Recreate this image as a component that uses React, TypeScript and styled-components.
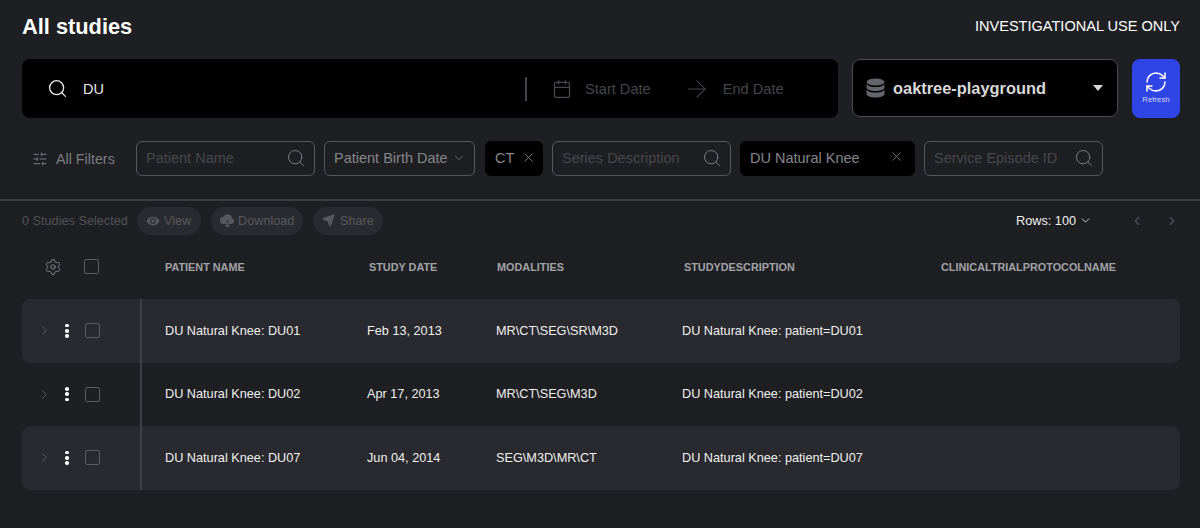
import React from "react";
import styled, { createGlobalStyle } from "styled-components";
import {
  Search, Calendar, ArrowRight, RefreshCw, SlidersHorizontal, ChevronDown, ChevronLeft, ChevronRight,
  X, Send, Settings,
} from "lucide-react";

const Global = createGlobalStyle`
  html, body { margin: 0; padding: 0; background: #1e1f23; }
  body { font-family: "Liberation Sans", Arial, sans-serif; width: 1200px; height: 528px; overflow: hidden; }
  * { box-sizing: border-box; }
`;

const Page = styled.div`
  width: 1200px;
  height: 528px;
  background: #1e1f23;
  color: #fff;
  display: flex;
  flex-direction: column;
`;
const Header = styled.header`
  height: 59px;
  padding: 14px 20px 0 22px;
  display: flex;
  justify-content: space-between;
  align-items: flex-start;
`;
const Title = styled.h1`
  margin: 0;
  font-size: 21.8px;
  line-height: 25px;
  font-weight: 700;
`;
const Notice = styled.div`
  font-size: 14.55px;
  line-height: 24px;
`;
const SearchRow = styled.div`
  display: flex;
  padding: 0 20px 0 22px;
  gap: 14px;
  height: 59px;
`;
const SearchBar = styled.div`
  flex: 0 0 816px;
  background: #000;
  border-radius: 8px;
  display: flex;
  align-items: center;
  padding-left: 25px;
  font-size: 14.5px;
`;
const SearchText = styled.span`
  flex: 0 0 441px;
  margin-left: 15px;
  color: #e8e8e8;
`;
const Separator = styled.span`
  width: 2px;
  height: 24px;
  background: #44464c;
  margin-right: 25px;
  margin-left: 1px;
`;
const DatePlaceholder = styled.span<{ $ml: number }>`
  color: #44464b;
  font-size: 14.6px;
  margin-left: ${(p) => p.$ml}px;
`;
const DatasetSelect = styled.div`
  flex: 0 0 266px;
  height: 58px;
  background: #000;
  border: 1px solid #4a4c52;
  border-radius: 8px;
  display: flex;
  align-items: center;
  padding: 0 14px 0 13px;
`;
const DatasetName = styled.span`
  flex: 1;
  margin-left: 8px;
  font-size: 16.4px;
  font-weight: 700;
  color: #d8d8d8;
`;
const Caret = styled.span`
  width: 0;
  height: 0;
  border-left: 5px solid transparent;
  border-right: 5px solid transparent;
  border-top: 6px solid #d8d8d8;
`;
const RefreshButton = styled.button`
  flex: 0 0 48px;
  border: 0;
  border-radius: 8px;
  background: #3045e6;
  display: flex;
  flex-direction: column;
  align-items: center;
  justify-content: center;
  gap: 1px;
  padding: 0 0 3px;
  font-family: inherit;
  font-size: 7.8px;
  color: #d0d6ff;
`;
const FilterRow = styled.div`
  display: flex;
  align-items: center;
  margin-top: 23px;
  height: 35px;
  padding-left: 32px;
`;
const AllFilters = styled.div`
  flex: 0 0 104px;
  display: flex;
  align-items: center;
  gap: 8px;
  color: #7a7c82;
  font-size: 14.3px;
`;
const Field = styled.div<{ $w: number; $mr: number; $filled?: boolean }>`
  flex: 0 0 ${(p) => p.$w}px;
  margin-right: ${(p) => p.$mr}px;
  height: 35px;
  border-radius: 6px;
  border: ${(p) => (p.$filled ? "0" : "1px solid #56585e")};
  background: ${(p) => (p.$filled ? "#000" : "transparent")};
  display: flex;
  align-items: center;
  justify-content: space-between;
  padding: 0 ${(p) => (p.$filled ? 7 : 8)}px 2px ${(p) => (p.$filled ? 10 : 9)}px;
  font-size: 14.5px;
  color: #46484d;
`;
const FieldValue = styled.span`
  color: #84868c;
`;
const Divider = styled.div`
  height: 2px;
  background: #3a3c41;
  margin-top: 23px;
`;
const ActionRow = styled.div`
  height: 33px;
  padding: 6px 0 0 22px;
  display: flex;
  align-items: center;
  font-size: 12.7px;
  color: #505257;
`;
const Selected = styled.span`
  flex: 0 0 115px;
`;
const Pill = styled.span<{ $w: number; $gap: number }>`
  flex: 0 0 ${(p) => p.$w}px;
  height: 28px;
  border-radius: 14px;
  background: #2a2b30;
  padding: 0 0 0 9px;
  display: flex;
  align-items: center;
  gap: ${(p) => p.$gap}px;
  margin-right: 10px;
  color: #57595e;
`;
const Rows = styled.div`
  margin-left: auto;
  margin-right: 38px;
  display: flex;
  align-items: center;
  gap: 3px;
  color: #f0f0f0;
  font-size: 12.7px;
`;
const Pager = styled.div`
  display: flex;
  gap: 21px;
  margin-right: 21px;
  color: #50525a;
`;
const TableHead = styled.div`
  margin: 0 20px 0 22px;
  height: 65px;
  display: grid;
  grid-template-columns: 120px 23px 204px 128px 187px 257px 1fr;
  align-items: center;
  font-size: 10.85px;
  font-weight: 700;
  color: #a2a3a8;
  padding-top: 1px;
`;
const HeadControls = styled.div`
  grid-column: 1 / 3;
  display: flex;
  align-items: center;
  padding-left: 22px;
  gap: 22px;
  margin-top: -1px;
`;
const Box = styled.span`
  width: 15px;
  height: 15px;
  border: 1px solid #5a5c62;
  border-radius: 2px;
  display: block;
`;
const Row = styled.div<{ $striped: boolean }>`
  margin: 0 20px 0 22px;
  height: 63.5px;
  border-radius: 8px;
  background: ${(p) => (p.$striped ? "#292a2f" : "transparent")};
  display: grid;
  grid-template-columns: 120px 23px 202px 129px 186px 1fr;
  align-items: center;
  font-size: 12.7px;
  color: #f0f0f0;
`;
const RowControls = styled.div`
  height: 100%;
  grid-column: 1 / 3;
  width: 120px;
  display: flex;
  align-items: center;
  padding-left: 15px;
  border-right: 2px solid #3f4146;
  color: #65676c;
`;
const Menu = styled.span`
  display: flex;
  flex-direction: column;
  gap: 1.6px;
  margin: 0 16px 0 13px;
`;
const Dot = styled.span`
  width: 3.6px;
  height: 3.6px;
  border-radius: 50%;
  background: #fff;
`;

const rows = [
  ["DU Natural Knee: DU01", "Feb 13, 2013", "MR\\CT\\SEG\\SR\\M3D", "DU Natural Knee: patient=DU01"],
  ["DU Natural Knee: DU02", "Apr 17, 2013", "MR\\CT\\SEG\\M3D", "DU Natural Knee: patient=DU02"],
  ["DU Natural Knee: DU07", "Jun 04, 2014", "SEG\\M3D\\MR\\CT", "DU Natural Knee: patient=DU07"],
];

const DbIcon = () => (
  <svg width="19" height="21" viewBox="0 0 19 21" fill="#63656b">
    <ellipse cx="9.500" cy="4" rx="9" ry="3.600" />
    <path d="M.5 6.200c1.600 2 5 2.900 9 2.900s7.400-.9 9-2.900v3.300c0 2-4 3.600-9 3.600s-9-1.600-9-3.600z" />
    <path d="M.5 11.700c1.600 2 5 2.900 9 2.900s7.400-.9 9-2.900v4.300c0 2-4 3.600-9 3.600s-9-1.600-9-3.600z" />
  </svg>
);

const FilledEye = () => (
  <svg width="14" height="14" viewBox="0 0 24 24" fill="#57595e">
    <path d="M12 4.500C7 4.500 2.700 7.600 1 12c1.700 4.400 6 7.500 11 7.500s9.300-3.100 11-7.500c-1.700-4.400-6-7.500-11-7.500zM12 17a5 5 0 1 1 0-10 5 5 0 0 1 0 10zm0-8a3 3 0 1 0 0 6 3 3 0 0 0 0-6z" />
  </svg>
);

const CloudDown = () => (
  <svg width="15" height="15" viewBox="0 0 24 24" fill="#57595e">
    <path d="M19.200 8.200A7.500 7.500 0 0 0 5 6.400 5.500 5.500 0 0 0 5.500 17.400H10V12h4v5.400h4.500a4.700 4.700 0 0 0 .7-9.200z" />
    <path d="M10.500 13h3v6h2.700L12 23.500 7.800 19h2.700z" />
  </svg>
);

export default function App() {
  return (
    <Page>
      <Global />
      <Header>
        <Title>All studies</Title>
        <Notice>INVESTIGATIONAL USE ONLY</Notice>
      </Header>
      <SearchRow>
        <SearchBar>
          <Search size={21} strokeWidth={1.5} color="#e8e8e8" />
          <SearchText>DU</SearchText>
          <Separator />
          <Calendar size={20} strokeWidth={1.5} color="#46484d" />
          <DatePlaceholder $ml={13}>Start Date</DatePlaceholder>
          <ArrowRight size={28} strokeWidth={0.9} color="#46484d" style={{ marginLeft: 32 }} />
          <DatePlaceholder $ml={12}>End Date</DatePlaceholder>
        </SearchBar>
        <DatasetSelect>
          <DbIcon />
          <DatasetName>oaktree-playground</DatasetName>
          <Caret />
        </DatasetSelect>
        <RefreshButton>
          <RefreshCw size={24} strokeWidth={1.5} color="#fff" />
          Refresh
        </RefreshButton>
      </SearchRow>
      <FilterRow>
        <AllFilters>
          <SlidersHorizontal size={16} strokeWidth={1.5} />
          All Filters
        </AllFilters>
        <Field $w={179} $mr={9}>
          Patient Name
          <Search size={20} strokeWidth={1.2} color="#7a7c82" />
        </Field>
        <Field $w={151} $mr={10}>
          <FieldValue>Patient Birth Date</FieldValue>
          <ChevronDown size={14} strokeWidth={1.3} color="#7a7c82" />
        </Field>
        <Field $w={58} $mr={9} $filled>
          <FieldValue>CT</FieldValue>
          <X size={15} strokeWidth={1.3} color="#84868c" />
        </Field>
        <Field $w={179} $mr={9}>
          Series Description
          <Search size={20} strokeWidth={1.2} color="#7a7c82" />
        </Field>
        <Field $w={175} $mr={9} $filled>
          <FieldValue>DU Natural Knee</FieldValue>
          <X size={15} strokeWidth={1.3} color="#84868c" style={{ marginRight: 4, marginTop: -2 }} />
        </Field>
        <Field $w={179} $mr={0}>
          Service Episode ID
          <Search size={20} strokeWidth={1.2} color="#7a7c82" />
        </Field>
      </FilterRow>
      <Divider />
      <ActionRow>
        <Selected>0 Studies Selected</Selected>
        <Pill $w={64} $gap={4}>
          <FilledEye />
          View
        </Pill>
        <Pill $w={92} $gap={3}>
          <CloudDown />
          Download
        </Pill>
        <Pill $w={70} $gap={5}>
          <Send size={13} color="#57595e" fill="#57595e" />
          Share
        </Pill>
        <Rows>
          Rows: 100 <ChevronDown size={13} strokeWidth={1.5} />
        </Rows>
        <Pager>
          <ChevronLeft size={14} />
          <ChevronRight size={14} />
        </Pager>
      </ActionRow>
      <TableHead>
        <HeadControls>
          <Settings size={18} strokeWidth={1.3} color="#85878c" />
          <Box />
        </HeadControls>
        <span>PATIENT NAME</span>
        <span>STUDY DATE</span>
        <span>MODALITIES</span>
        <span>STUDYDESCRIPTION</span>
        <span>CLINICALTRIALPROTOCOLNAME</span>
      </TableHead>
      {rows.map((r, i) => (
        <Row key={r[0]} $striped={i !== 1}>
          <RowControls>
            <ChevronRight size={15} strokeWidth={1.3} />
            <Menu>
              <Dot />
              <Dot />
              <Dot />
            </Menu>
            <Box />
          </RowControls>
          {r.map((c) => (
            <span key={c}>{c}</span>
          ))}
        </Row>
      ))}
    </Page>
  );
}
